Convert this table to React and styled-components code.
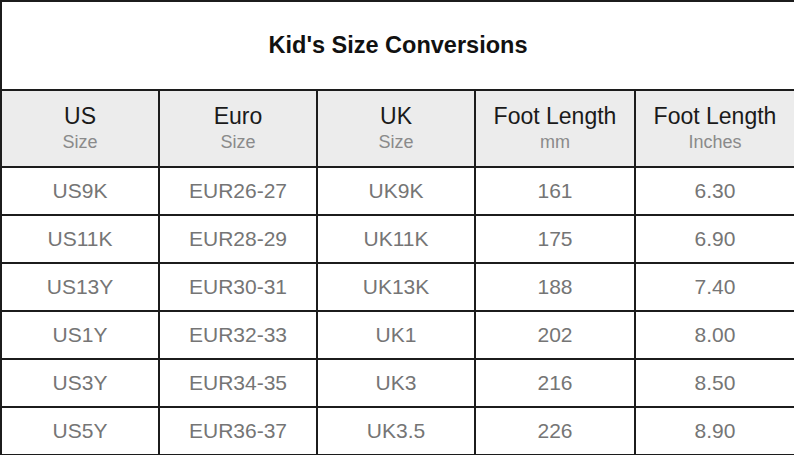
import React from 'react';
import styled, { createGlobalStyle } from 'styled-components';

const GlobalStyle = createGlobalStyle`
  html, body {
    margin: 0;
    padding: 0;
    background: #ffffff;
  }
  body {
    font-family: "Liberation Sans", Arial, sans-serif;
  }
`;

const Table = styled.table`
  width: 794px;
  border-collapse: collapse;
  table-layout: fixed;
  font-family: "Liberation Sans", Arial, sans-serif;
  border: 2px solid #1c1c1c;
`;

const Col = styled.col`
  width: ${({ $w }) => $w}px;
`;

const TitleCell = styled.th`
  height: 87px;
  padding: 0;
  border: 2px solid #1c1c1c;
  font-size: 23.5px;
  font-weight: bold;
  color: #111;
  text-align: center;
  vertical-align: middle;
`;

const HeadCell = styled.th`
  height: 75px;
  padding: 0;
  border: 2px solid #1c1c1c;
  background: #ececec;
  font-weight: normal;
  text-align: center;
  vertical-align: middle;
`;

const HeadMain = styled.div`
  font-size: 23px;
  line-height: 26px;
  color: #1a1a1a;
`;

const HeadSub = styled.div`
  font-size: 18px;
  line-height: 26px;
  color: #8a8a8a;
`;

const Cell = styled.td`
  height: 46px;
  padding: 0;
  border: 2px solid #1c1c1c;
  font-size: 21px;
  color: #757575;
  text-align: center;
  vertical-align: middle;
`;

const columns = [
  { main: 'US', sub: 'Size', w: 158 },
  { main: 'Euro', sub: 'Size', w: 158 },
  { main: 'UK', sub: 'Size', w: 158 },
  { main: 'Foot Length', sub: 'mm', w: 160 },
  { main: 'Foot Length', sub: 'Inches', w: 160 },
];

const rows = [
  ['US9K', 'EUR26-27', 'UK9K', '161', '6.30'],
  ['US11K', 'EUR28-29', 'UK11K', '175', '6.90'],
  ['US13Y', 'EUR30-31', 'UK13K', '188', '7.40'],
  ['US1Y', 'EUR32-33', 'UK1', '202', '8.00'],
  ['US3Y', 'EUR34-35', 'UK3', '216', '8.50'],
  ['US5Y', 'EUR36-37', 'UK3.5', '226', '8.90'],
];

export default function App() {
  return (
    <>
      <GlobalStyle />
      <Table>
        <colgroup>
          {columns.map((c, i) => (
            <Col key={i} $w={c.w} />
          ))}
        </colgroup>
        <thead>
          <tr>
            <TitleCell colSpan={5}>Kid's Size Conversions</TitleCell>
          </tr>
          <tr>
            {columns.map((c, i) => (
              <HeadCell key={i}>
                <HeadMain>{c.main}</HeadMain>
                <HeadSub>{c.sub}</HeadSub>
              </HeadCell>
            ))}
          </tr>
        </thead>
        <tbody>
          {rows.map((r, i) => (
            <tr key={i}>
              {r.map((v, j) => (
                <Cell key={j}>{v}</Cell>
              ))}
            </tr>
          ))}
        </tbody>
      </Table>
    </>
  );
}
